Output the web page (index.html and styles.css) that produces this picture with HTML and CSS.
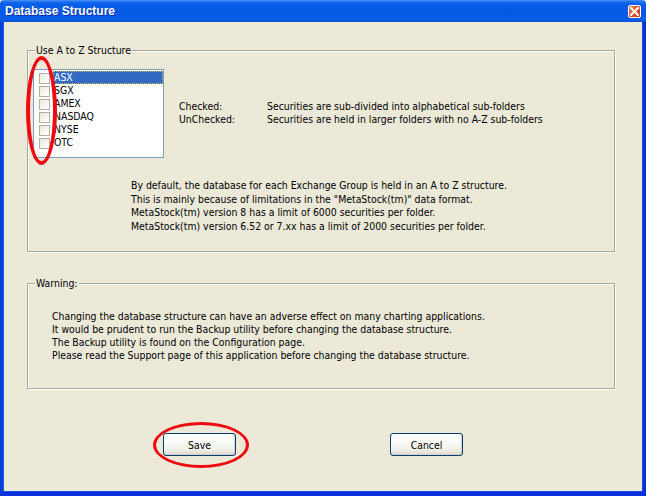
FILE: index.html
```html
<!DOCTYPE html>
<html>
<head>
<meta charset="utf-8">
<link rel="stylesheet" href="styles.css">
</head>
<body>
<div class="window">
  <div class="titlebar">
    <span class="title">Database Structure</span>
    <span class="close" aria-label="Close">
      <svg width="9" height="9" viewBox="0 0 9 9"><path d="M1 1 L8 8 M8 1 L1 8" stroke="#fff" stroke-width="2" stroke-linecap="square"/></svg>
    </span>
  </div>
  <div class="client">
    <div class="group g1">
      <div class="legend">Use A to Z Structure</div>
      <div class="g1-top">
        <ul class="listbox">
          <li class="item selected"><span class="cb"></span><span class="lbl">ASX</span></li>
          <li class="item"><span class="cb"></span><span class="lbl">SGX</span></li>
          <li class="item"><span class="cb"></span><span class="lbl">AMEX</span></li>
          <li class="item"><span class="cb"></span><span class="lbl">NASDAQ</span></li>
          <li class="item"><span class="cb"></span><span class="lbl">NYSE</span></li>
          <li class="item"><span class="cb"></span><span class="lbl">OTC</span></li>
        </ul>
        <div class="keys">
          <div class="krow"><span class="k">Checked:</span><span>Securities are sub-divided into alphabetical sub-folders</span></div>
          <div class="krow"><span class="k">UnChecked:</span><span>Securities are held in larger folders with no A-Z sub-folders</span></div>
        </div>
      </div>
      <p class="note">By default, the database for each Exchange Group is held in an A to Z structure.<br>This is mainly because of limitations in the "MetaStock(tm)" data format.<br>MetaStock(tm) version 8 has a limit of 6000 securities per folder.<br>MetaStock(tm) version 6.52 or 7.xx has a limit of 2000 securities per folder.</p>
    </div>
    <div class="group g2">
      <div class="legend">Warning:</div>
      <p class="warn">Changing the database structure can have an adverse effect on many charting applications.<br>It would be prudent to run the Backup utility before changing the database structure.<br>The Backup utility is found on the Configuration page.<br>Please read the Support page of this application before changing the database structure.</p>
    </div>
    <div class="buttons">
      <button class="btn">Save</button>
      <button class="btn">Cancel</button>
    </div>
  </div>
  <div class="mark mark-list"></div>
  <div class="mark mark-save"></div>
</div>
</body>
</html>
```
FILE: styles.css
```css
* { box-sizing: border-box; }
html, body { margin: 0; padding: 0; background: #ece9d8; }
body { font-family: "DejaVu Sans Condensed", "DejaVu Sans", sans-serif; font-size: 10.4px; color: #000; }

.window {
  position: relative;
  width: 646px;
  height: 496px;
  display: flex;
  flex-direction: column;
}

.titlebar {
  height: 22px;
  flex: none;
  display: flex;
  align-items: center;
  justify-content: space-between;
  padding: 0 5px 0 5px;
  background: linear-gradient(to bottom, #4a95f8 0, #1a6bf0 2px, #0a5fe8 4px, #0558e6 60%, #0a5ee8 85%, #0a4fd8 100%);
  border-top-left-radius: 4px;
  border-top-right-radius: 4px;
}
.title {
  color: #fff;
  font-family: "Liberation Sans", Arial, sans-serif;
  font-weight: bold;
  font-size: 12px;
  text-shadow: 1px 1px 0 #0a2ea8;
}
.close {
  width: 13px;
  height: 13px;
  border: 1px solid #fff;
  border-radius: 2px;
  background: linear-gradient(135deg, #f08a68 0, #e2562e 45%, #cc3a16 100%);
  display: flex;
  align-items: center;
  justify-content: center;
}

.client {
  flex: 1;
  background: #ece9d8;
  border-left: 3px solid #0a3fd6;
  border-right: 3px solid #0831d9;
  border-bottom: 4px solid #0831d9;
  box-shadow: inset 1px 0 0 #1a5ff0, inset -1px 0 0 #1650e0, inset 0 -1px 0 #1650e0;
  display: flex;
  flex-direction: column;
}

.group {
  margin-left: 24px;
  width: 588px;
  border: 1px solid #aca899;
  box-shadow: inset 1px 1px 0 #fff, 1px 1px 0 #fff;
}
.g1 { margin-top: 28px; height: 202px; }
.g2 { margin-top: 31px; height: 106px; }

.legend {
  display: table;
  margin: -7px 0 0 7px;
  padding: 0 1px;
  line-height: 13px;
  background: #ece9d8;
}

.g1-top {
  display: flex;
  align-items: flex-start;
  margin: 12px 0 0 5px;
}

.listbox {
  list-style: none;
  margin: 0;
  padding: 1px 0 0 0;
  width: 131px;
  height: 89px;
  background: #fff;
  border: 1px solid #7f9db9;
}
.item {
  display: flex;
  align-items: flex-start;
  height: 13px;
  line-height: 13px;
}
.cb {
  flex: none;
  width: 11px;
  height: 11px;
  margin: 2px 3px 0 5px;
  border: 1px solid #b3af9f;
  background: linear-gradient(135deg, #e9e8e2 0, #f6f6f3 60%, #fff 100%);
}
.lbl {
  flex: 1;
  padding-left: 1px;
}
.item.selected .lbl {
  background: #316ac5;
  color: #fff;
  outline: 1px dotted #d9b64a;
  outline-offset: -1px;
}

.keys {
  margin: 31px 0 0 15px;
}
.krow {
  display: flex;
  line-height: 13px;
}
.k { width: 88px; flex: none; }

.note {
  margin: 21px 0 0 103px;
  line-height: 13.5px;
}

.warn {
  margin: 20px 0 0 24px;
  line-height: 13px;
}

.buttons {
  display: flex;
  margin: 44px 0 0 160px;
  gap: 154px;
}
.btn {
  width: 73px;
  height: 23px;
  font-family: "DejaVu Sans Condensed", "DejaVu Sans", sans-serif;
  font-size: 10.4px;
  color: #000;
  border: 1px solid #003c74;
  border-radius: 3px;
  background: linear-gradient(to bottom, #fff 0, #fbfbf9 40%, #f0efe8 75%, #dcd8cc 100%);
  box-shadow: inset -1px -1px 0 #d6d0c5;
  padding: 0;
}

.mark {
  position: absolute;
  border: 3px solid #ee0a10;
  border-radius: 50%;
  pointer-events: none;
}
.mark-list { left: 26px; top: 56px; width: 31px; height: 109px; border-width: 4px; }
.mark-save { left: 153px; top: 422px; width: 96px; height: 46px; }
```
